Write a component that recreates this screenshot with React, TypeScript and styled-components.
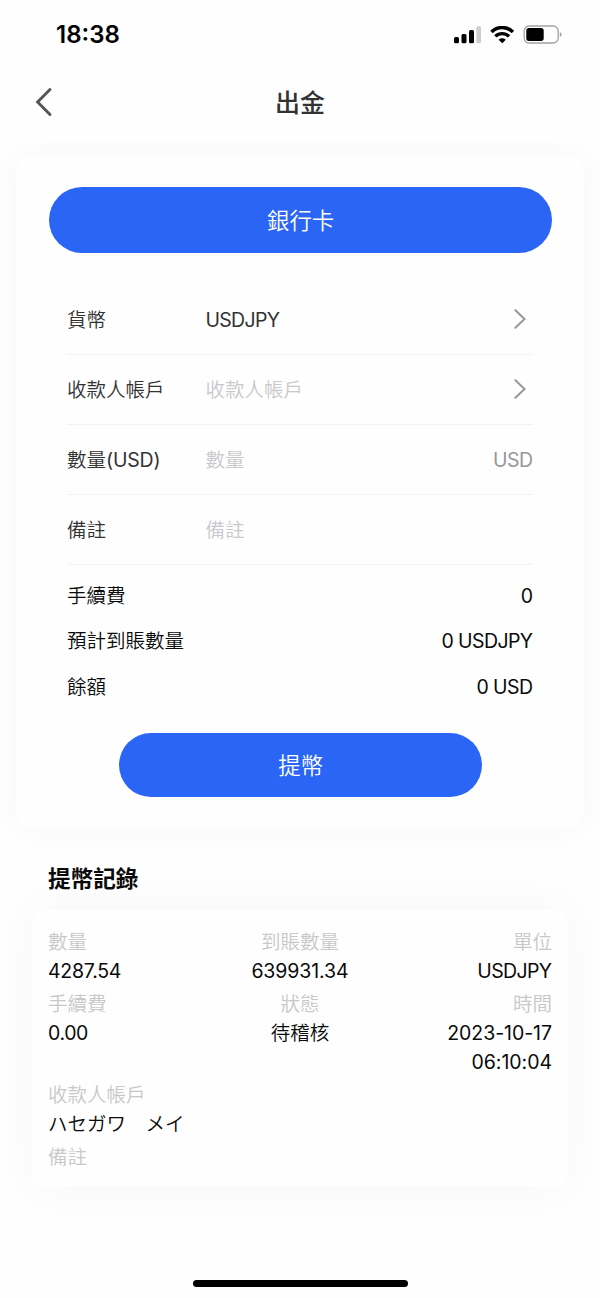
import React from "react";
import styled, { createGlobalStyle } from "styled-components";

const GlobalStyle = createGlobalStyle`
  *, *::before, *::after { box-sizing: border-box; }
  body {
    margin: 0;
    background: #fefefe;
    color: #0a0a0a;
    font-family: Inter, "Noto Sans CJK TC", sans-serif;
    font-size: 19.5px;
    font-weight: 350;
    line-height: 29.25px;
  }
  button { font: inherit; border: 0; padding: 0; }
`;

const Screen = styled.div`
  width: 600px;
  height: 1298px;
  display: flex;
  flex-direction: column;
  overflow: hidden;
  background: #fefefe;
`;

const TopArea = styled.header`
  position: relative;
  z-index: 1;
  flex: none;
  height: 140px;
  background: #fefefe;
`;

const StatusBar = styled.div`
  display: flex;
  align-items: center;
  justify-content: space-between;
  height: 69px;
  padding: 0 37px 0 56px;
`;

const Clock = styled.span`
  font-size: 24px;
  font-weight: 600;
  color: #000;
`;

const StatusIcons = styled.div`
  display: flex;
  align-items: center;
  gap: 9px;
`;

const NavBar = styled.div`
  display: grid;
  grid-template-columns: 60px 1fr 60px;
  align-items: center;
  height: 66px;
  padding: 0 16px;
`;

const BackButton = styled.button`
  display: flex;
  justify-content: flex-start;
  padding-left: 18px;
  background: none;
`;

const Title = styled.h1`
  margin: 0;
  padding-top: 4px;
  text-align: center;
  font-size: 25px;
  font-weight: 500;
  color: #323233;
`;

const Body = styled.main`
  flex: 1;
  padding-top: 15px;
`;

const Card = styled.section`
  margin: 0 16px;
  height: 674px;
  padding: 32px 32px 0 33px;
  border-radius: 16px;
  background: #fefefe;
  box-shadow: 0 0 32px rgba(0, 0, 0, 0.035);
`;

const PillButton = styled.button<{ $inset?: number; $height: number; $drop?: number }>`
  display: flex;
  align-items: center;
  justify-content: center;
  width: ${(p) => 502.5 - (p.$inset || 0) * 2}px;
  height: ${(p) => p.$height}px;
  margin: 0 0 0 ${(p) => 0.4 + (p.$inset || 0)}px;
  padding-top: ${(p) => p.$drop || 0}px;
  border-radius: 33px;
  background: #2a65f5;
  color: #fff;
  font-size: 22.4px;
`;

const Form = styled.div`
  margin-top: 32px;
  padding: 0 19px 0 18px;
`;

const FieldRow = styled.div`
  display: grid;
  grid-template-columns: 138.4px 1fr auto;
  align-items: center;
  height: 70px;
  padding-top: 2px;
  border-bottom: 1px solid #f3f3f4;
  color: #323233;
`;

const Latin = styled.span<{ $tight?: number }>`
  font-weight: 400;
  letter-spacing: ${(p) => -(p.$tight || 0)}px;
  margin-right: ${(p) => p.$tight || 0}px;
`;

const Value = styled.span<{ $placeholder?: boolean }>`
  color: ${(p) => (p.$placeholder ? "#c8c9cc" : "#323233")};
`;

const Unit = styled(Latin)`
  color: #969799;
`;

const Arrow = styled.svg`
  display: block;
  margin: 0 7px 2.5px 0;
`;

const Summary = styled.dl`
  display: flex;
  flex-direction: column;
  gap: 16.4px;
  margin: 16.6px 0 30.6px;
`;

const SummaryLine = styled.div`
  display: flex;
  justify-content: space-between;
  dd { margin: 0; }
`;

const SectionTitle = styled.h2`
  margin: 34px 48px 16px;
  font-size: 22.6px;
  font-weight: 700;
  line-height: 31px;
  color: #0a0a0a;
`;

const RecordCard = styled.section`
  display: grid;
  grid-template-columns: repeat(3, 1fr);
  row-gap: 3.4px;
  height: 277px;
  margin: 0 32px;
  padding: 18px 16px 0;
  align-content: start;
  border-radius: 13px;
  background: #fefefe;
  box-shadow: 0 0 48px rgba(0, 0, 0, 0.035);
`;

const RecordCell = styled.div<{ $align?: string; $wide?: boolean }>`
  display: flex;
  flex-direction: column;
  text-align: ${(p) => p.$align || "left"};
  grid-column: ${(p) => (p.$wide ? "1 / -1" : "auto")};
`;

const RecordLabel = styled.span`
  color: #c8c8c8;
`;

const RecordValue = styled.span`
  white-space: pre-line;
`;

const HomeIndicator = styled.div`
  flex: none;
  width: 215px;
  height: 7px;
  margin: 0 auto 11px;
  border-radius: 4px;
  background: #000;
`;

const SignalIcon = () => (
  <svg width="28" height="20" viewBox="0 0 28 20">
    <rect x="1" y="12" width="5" height="6.2" rx="1.5" fill="#000" />
    <rect x="8.5" y="9" width="5" height="9.2" rx="1.5" fill="#000" />
    <rect x="16" y="5" width="5" height="13.2" rx="1.5" fill="#000" />
    <rect x="23.4" y="1.2" width="4.6" height="17" rx="1.5" fill="#ccc" />
  </svg>
);

const WifiIcon = () => (
  <svg width="24" height="18" viewBox="0 0 24 18" fill="none" stroke="#000" strokeWidth="3.4">
    <path d="M1.5 6a15 15 0 0 1 21.4 0" />
    <path d="M5.4 10.4a9.6 9.6 0 0 1 13.6 0" />
    <path d="M12.2 17.3l-3.6-3.6a5.1 5.1 0 0 1 7.2 0z" fill="#000" stroke="none" />
  </svg>
);

const BatteryIcon = () => (
  <svg width="40" height="20" viewBox="0 0 40 20">
    <rect x="1.2" y="1" width="34" height="17" rx="5" fill="none" stroke="#a3a3a3" strokeWidth="1.3" />
    <rect x="3.3" y="3.1" width="17.4" height="12.8" rx="2.6" fill="#000" />
    <path d="M36.8 7.2c2.4.5 2.4 4.1 0 4.6z" fill="#a3a3a3" />
  </svg>
);

const ArrowRight = () => (
  <Arrow width="12" height="20" viewBox="0 0 12 20" fill="none" stroke="#969799" strokeWidth="2">
    <path d="M1.4 1.2l9.2 8.8-9.2 8.8" strokeLinecap="round" />
  </Arrow>
);

const fields = [
  { label: "貨幣", value: "USDJPY", extra: <ArrowRight /> },
  { label: "收款人帳戶", placeholder: "收款人帳戶", extra: <ArrowRight /> },
  { label: "數量", suffix: "(USD)", placeholder: "數量", extra: <Unit $tight={0.5}>USD</Unit> },
  { label: "備註", placeholder: "備註" },
];

const summary = [
  ["手續費", "0"],
  ["預計到賬數量", "0 USDJPY"],
  ["餘額", "0 USD"],
];

const record = [
  { label: "數量", value: "4287.54", tight: 0.25 },
  { label: "到賬數量", value: "639931.34", align: "center", tight: 0.1 },
  { label: "單位", value: "USDJPY", align: "right", tight: 0.65 },
  { label: "手續費", value: "0.00", tight: 0.4 },
  { label: "狀態", value: "待稽核", align: "center", cjk: true },
  { label: "時間", value: "2023-10-17\n06:10:04", align: "right", tight: 0.05 },
  { label: "收款人帳戶", value: "ハセガワ　メイ", wide: true, cjk: true },
  { label: "備註", value: "", wide: true },
];

export default function App() {
  return (
    <Screen>
      <GlobalStyle />
      <TopArea>
        <StatusBar>
          <Clock>18:38</Clock>
          <StatusIcons>
            <SignalIcon />
            <WifiIcon />
            <BatteryIcon />
          </StatusIcons>
        </StatusBar>
        <NavBar>
          <BackButton aria-label="返回">
            <svg width="20" height="30" viewBox="0 0 20 30" fill="none" stroke="#555557" strokeWidth="2.9">
              <path d="M16 2.5L3.6 15 16 27.5" strokeLinecap="round" />
            </svg>
          </BackButton>
          <Title>出金</Title>
        </NavBar>
      </TopArea>
      <Body>
        <Card>
          <PillButton $height={66} $drop={2}>銀行卡</PillButton>
          <Form>
            {fields.map((f) => (
              <FieldRow key={f.label}>
                <span>
                  {f.label}
                  {f.suffix && <Latin $tight={0.2}>{f.suffix}</Latin>}
                </span>
                <Value $placeholder={!f.value}>
                  {f.value ? <Latin $tight={0.65}>{f.value}</Latin> : f.placeholder}
                </Value>
                {f.extra}
              </FieldRow>
            ))}
            <Summary>
              {summary.map(([label, value]) => (
                <SummaryLine key={label}>
                  <dt>{label}</dt>
                  <dd>
                    <Latin $tight={0.6}>{value}</Latin>
                  </dd>
                </SummaryLine>
              ))}
            </Summary>
          </Form>
          <PillButton $inset={70} $height={64} $drop={2}>提幣</PillButton>
        </Card>
        <SectionTitle>提幣記錄</SectionTitle>
        <RecordCard>
          {record.map((r) => (
            <RecordCell key={r.label} $align={r.align} $wide={r.wide}>
              <RecordLabel>{r.label}</RecordLabel>
              <RecordValue>
                {r.cjk ? r.value : <Latin $tight={r.tight}>{r.value}</Latin>}
              </RecordValue>
            </RecordCell>
          ))}
        </RecordCard>
      </Body>
      <HomeIndicator />
    </Screen>
  );
}
